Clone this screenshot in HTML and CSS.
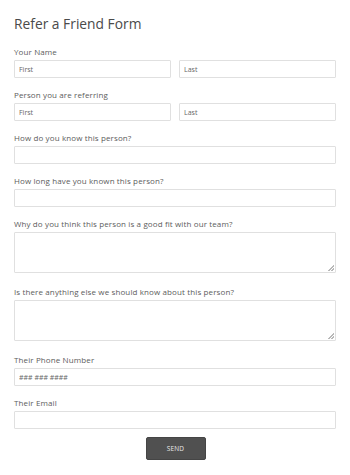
FILE: index.html
```html
<!DOCTYPE html>
<html>
<head>
<meta charset="utf-8">
<link rel="stylesheet" href="styles.css">
</head>
<body>
<form class="form">
  <h1 class="title">Refer a Friend Form</h1>
  <div class="field">
    <label class="label">Your Name</label>
    <div class="pair">
      <input class="input" type="text" placeholder="First">
      <input class="input" type="text" placeholder="Last">
    </div>
  </div>
  <div class="field">
    <label class="label">Person you are referring</label>
    <div class="pair">
      <input class="input" type="text" placeholder="First">
      <input class="input" type="text" placeholder="Last">
    </div>
  </div>
  <div class="field">
    <label class="label">How do you know this person?</label>
    <input class="input" type="text">
  </div>
  <div class="field">
    <label class="label">How long have you known this person?</label>
    <input class="input" type="text">
  </div>
  <div class="field field-area">
    <label class="label">Why do you think this person is a good fit with our team?</label>
    <textarea class="area"></textarea>
  </div>
  <div class="field field-area">
    <label class="label">Is there anything else we should know about this person?</label>
    <textarea class="area"></textarea>
  </div>
  <div class="field">
    <label class="label">Their Phone Number</label>
    <input class="input" type="text" placeholder="### ### ####">
  </div>
  <div class="field field-last">
    <label class="label">Their Email</label>
    <input class="input" type="text">
  </div>
  <div class="actions">
    <button class="send" type="button">SEND</button>
  </div>
</form>
</body>
</html>
```
FILE: styles.css
```css
html, body {
  margin: 0;
  padding: 0;
  background: #ffffff;
}
body {
  font-family: "Open Sans", "Liberation Sans", sans-serif;
  color: #555;
}
.form {
  display: flex;
  flex-direction: column;
  padding: 15px 14px 0 14px;
  width: 322px;
}
.title {
  margin: 0 0 14px 0;
  font-size: 13.8px;
  line-height: 18px;
  font-weight: 400;
  color: #4a4a4a;
}
.field {
  display: flex;
  flex-direction: column;
  margin-bottom: 12px;
}
.field-area {
  margin-bottom: 14px;
}
.field-last {
  margin-bottom: 8px;
}
.label {
  font-size: 8px;
  line-height: 10px;
  letter-spacing: 0.12px;
  color: #5c5c5c;
  margin-bottom: 3px;
}
.pair {
  display: grid;
  grid-template-columns: 157px 157px;
  column-gap: 8px;
}
.input, .area {
  box-sizing: border-box;
  width: 100%;
  margin: 0;
  border: 1px solid #e0e0e0;
  border-radius: 1px;
  background-color: #fff;
  font-family: "Open Sans", "Liberation Sans", sans-serif;
  font-size: 7px;
  color: #555;
  padding: 0 4px;
  outline: none;
}
.input {
  height: 18px;
}
.area {
  display: block;
  height: 41px;
  resize: none;
  background-image: linear-gradient(135deg, transparent 0 48%, #b8b8b8 48% 60%, transparent 60% 74%, #b8b8b8 74% 86%, transparent 86%);
  background-repeat: no-repeat;
  background-size: 6px 6px;
  background-position: right 1px bottom 1px;
}
.input::placeholder {
  color: #666;
  opacity: 1;
}
.actions {
  display: flex;
  justify-content: center;
}
.send {
  box-sizing: border-box;
  width: 60px;
  height: 23px;
  margin-left: 1px;
  background: #505050;
  border: 1px solid #454545;
  border-radius: 2px;
  color: #e8e8e8;
  font-family: "Open Sans", "Liberation Sans", sans-serif;
  font-size: 6.5px;
  letter-spacing: 0.2px;
  padding: 0;
}
```
